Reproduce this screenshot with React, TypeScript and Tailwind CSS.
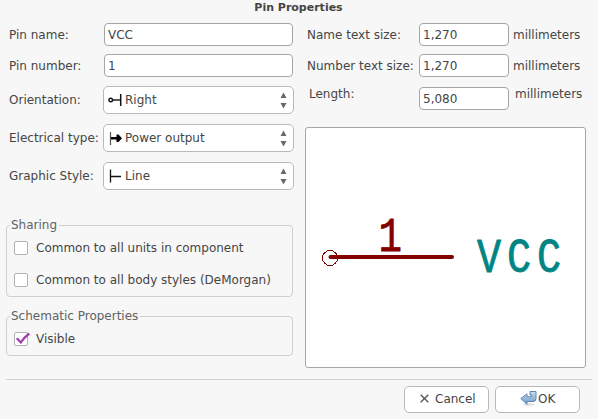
import type { ReactNode } from 'react';

function Field({ value, className }: { value: string; className: string }) {
  return (
    <div className={`flex h-[23px] shrink-0 items-center rounded-[4px] border border-[#a6a6a6] bg-white pl-[3px] ${className}`}>
      {value}
    </div>
  );
}

function Combo({ icon, label }: { icon: ReactNode; label: string }) {
  return (
    <div className="flex h-7 w-[191px] shrink-0 items-center rounded-[5px] border border-[#b9b9b9] bg-white pr-1.5 pl-1">
      <svg width="17" height="16" viewBox="0 0 17 16" className="shrink-0">{icon}</svg>
      <span className="grow">{label}</span>
      <svg width="7" height="18" viewBox="0 0 7 18" className="shrink-0" fill="#686868">
        <path d="M3.5 1.5 6.5 7H.5zM3.5 17.5 6.5 12H.5z" />
      </svg>
    </div>
  );
}

function LeftRow({ label, className, children }: { label: string; className: string; children: ReactNode }) {
  return (
    <div className={`flex items-center ${className}`}>
      <span className="grow">{label}</span>
      {children}
    </div>
  );
}

function Check({ label, checked = false }: { label: string; checked?: boolean }) {
  return (
    <div className="flex h-4 items-center gap-2">
      <span className="h-[14px] w-[14px] rounded-[2px] border border-[#b3b3b3] bg-white">
        {checked && (
          <svg width="16" height="13" viewBox="0 0 16 13" className="overflow-visible" fill="none" stroke="#a33fae">
            <path d="M1.8 5.3 5.8 9.5C8 6 11 3 14.3 .5" strokeWidth="2.3" />
          </svg>
        )}
      </span>
      <span>{label}</span>
    </div>
  );
}

function Group({ title, className, children }: { title: string; className: string; children: ReactNode }) {
  return (
    <div className={`w-[287px] rounded-[4px] border border-[#cfcfcf] pl-[7px] ${className}`}>
      <div className="-mt-[9px] -ml-1 flex h-4 items-center">
        <span className="bg-[#f7f7f7] pr-0.5 pl-px leading-4 text-[#626262]">{title}</span>
      </div>
      {children}
    </div>
  );
}

function Button({ children, className }: { children: ReactNode; className: string }) {
  return (
    <button className={`flex h-[27px] w-[85px] items-center rounded-[5px] border border-[#b9b9b9] bg-white pb-0.5 ${className}`}>
      {children}
    </button>
  );
}

function PinPreview() {
  return (
    <svg width="279" height="239" viewBox="306 128 279 239" className="block">
      <circle cx="330" cy="258" r="7.5" fill="none" stroke="#840000" strokeWidth="1" shapeRendering="crispEdges" />
      <path d="M330.5 257H452" stroke="#840000" strokeWidth="4" strokeLinecap="round" />
      <g fontSize="49" strokeWidth=".8" strokeLinejoin="round" fontFamily="'Liberation Mono', monospace">
        <text transform="translate(378.5 251.2) scale(.8 1)" fill="#840000" stroke="#840000">1</text>
        <text transform="translate(477 272.3) scale(.82 1)" letterSpacing="7.2" fill="#008484" stroke="#008484">VCC</text>
      </g>
    </svg>
  );
}

export default function App() {
  return (
    <div className="h-[419px] w-[598px] overflow-hidden bg-[#f7f7f7] font-['DejaVu_Sans',sans-serif] text-[12px] leading-4 whitespace-nowrap text-[#454545]">
      <h1 className="flex h-[15px] items-center justify-center pr-px text-[11px] font-bold">Pin Properties</h1>

      <div className="flex h-[364px]">
        <div className="w-[294px] pt-2">
          <LeftRow label="Pin name:" className="mr-px h-[23px] pl-[9px]"><Field value="VCC" className="w-[189px]" /></LeftRow>
          <LeftRow label="Pin number:" className="mt-2 mr-px h-[23px] pl-[9px]"><Field value="1" className="w-[189px]" /></LeftRow>
          <LeftRow label="Orientation:" className="mt-[9px] h-7 pl-[9px]">
            <Combo label="Right" icon={<g stroke="#111" fill="none"><circle cx="2.7" cy="8" r="1.8" strokeWidth="1.4" /><path d="M5 8h7" strokeWidth="1.4" /><path d="M12.7 2v12" strokeWidth="1.5" /></g>} />
          </LeftRow>
          <LeftRow label="Electrical type:" className="mt-2.5 h-7 pl-[9px]">
            <Combo label="Power output" icon={<g><path d="M2.5 2v13" stroke="#555" strokeWidth="1.2" /><path d="M3 7h5.5V4.5h2l3.5 3.7-3.5 3.7h-2V9.5H3z" fill="#000" /></g>} />
          </LeftRow>
          <LeftRow label="Graphic Style:" className="mt-2.5 h-7 pl-[9px]">
            <Combo label="Line" icon={<path d="M2.5 1.5v13M3 8.5h10" stroke="#111" strokeWidth="1.3" fill="none" />} />
          </LeftRow>
          <Group title="Sharing" className="mt-[35px] ml-1.5 h-[72px]">
            <div className="mt-[7px] flex flex-col gap-4">
              <Check label="Common to all units in component" />
              <Check label="Common to all body styles (DeMorgan)" />
            </div>
          </Group>
          <Group title="Schematic Properties" className="mt-[19px] ml-1.5 h-10">
            <div className="mt-[7px]"><Check label="Visible" checked /></div>
          </Group>
        </div>

        <div className="ml-[11px] w-[281px] pt-2">
          <div className="flex h-[23px] items-center pl-0.5">
            <span className="w-28">Name text size:</span><Field value="1,270" className="w-[90px]" /><span className="ml-1">millimeters</span>
          </div>
          <div className="mt-2 flex h-[23px] items-center pl-0.5">
            <span className="w-28">Number text size:</span><Field value="1,270" className="w-[90px]" /><span className="ml-1">millimeters</span>
          </div>
          <div className="mt-[9px] flex h-6 items-start pl-1">
            <span className="w-[110px]">Length:</span><Field value="5,080" className="mt-px w-[90px]" /><span className="ml-1.5">millimeters</span>
          </div>
          <div className="mt-[17px] h-[241px] w-[281px] rounded-[3px] border border-[#a6a6a6] bg-white"><PinPreview /></div>
        </div>
      </div>

      <div className="mx-1.5 flex justify-end gap-1.5 border-t border-[#d2d2d2] pt-1.5 pr-3">
        <Button className="pl-[15px]">
          <svg width="9" height="9" viewBox="0 0 9 9" stroke="#505050" strokeWidth="1.3"><path d="M.7.7l7.6 7.6M8.3.7.7 8.3" /></svg>
          <span className="ml-1.5">Cancel</span>
        </Button>
        <Button className="pl-6">
          <svg width="18" height="18" viewBox="0 0 18 18" className="mt-px">
            <defs><linearGradient id="enter" x2="0" y2="1"><stop stopColor="#c9def0" /><stop offset="1" stopColor="#6c99c8" /></linearGradient></defs>
            <ellipse cx="9" cy="14.5" rx="6" ry="1.5" fill="#e4e4e4" />
            <path d="M10 1.5h6v7.2q0 2.8-3 2.8H7v2.8L.8 8.5 7 3.8v3h4q1 0 1-1V5h-2z" fill="url(#enter)" stroke="#537cab" strokeWidth=".9" strokeLinejoin="round" />
          </svg>
          <span>OK</span>
        </Button>
      </div>
    </div>
  );
}
